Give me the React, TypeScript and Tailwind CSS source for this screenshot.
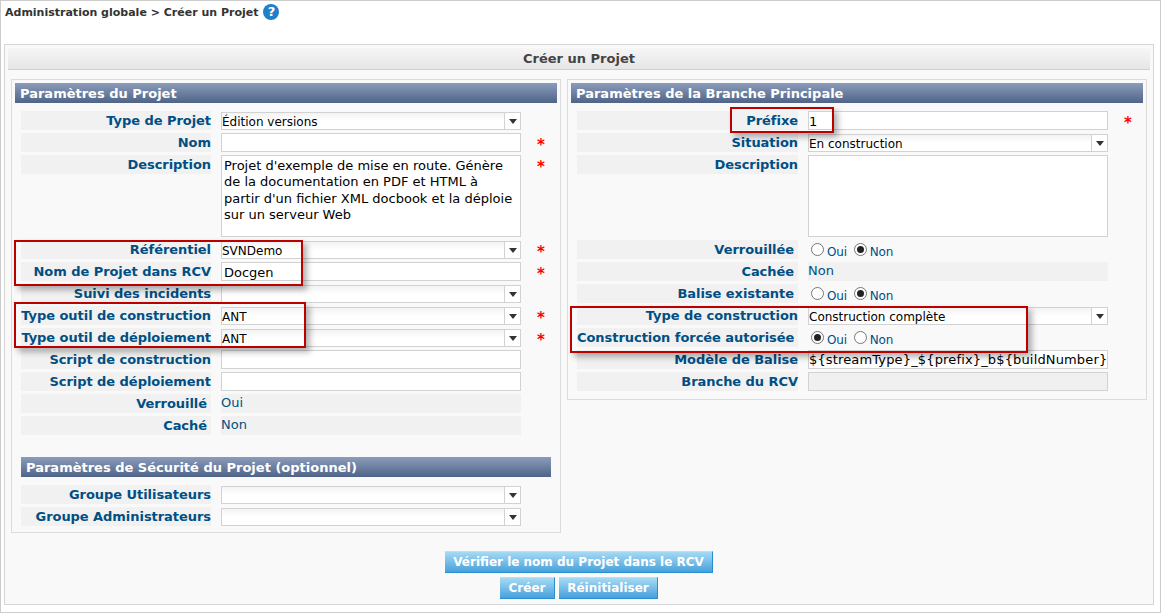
import React from "react";

const F = "font-['DejaVu_Sans','Liberation_Sans',sans-serif]";
const LABEL = "text-[#004f84]";

function Head({ children, className = "" }: { children: React.ReactNode; className?: string }) {
  return (
    <div className={`h-[20px] bg-gradient-to-b from-[#8c9dbb] to-[#4f6488] text-white font-bold text-[13px] leading-[21px] pl-[5px] ${className}`}>
      {children}
    </div>
  );
}

function Row({ label, w, vw, inset, star, h = 19, children }: { label: string; w: number; vw: number; inset?: boolean; star?: boolean; h?: number; children?: React.ReactNode }) {
  return (
    <div className="flex mb-[3px] items-start">
      <div
        className={`h-[19px] bg-[#f1f1f1] text-right font-bold text-[13px] leading-[19px] tracking-[-0.05px] shrink-0 whitespace-nowrap ${LABEL} ${inset ? "pr-[4px]" : ""}`}
        style={{ width: w }}
      >
        {label}
      </div>
      <div className="ml-[10px] shrink-0" style={{ width: vw, height: h }}>
        {children}
      </div>
      {star && <div className="ml-[16px] text-[#ff0000] font-bold text-[15px] leading-[25px] h-[19px]">*</div>}
    </div>
  );
}

function Select({ value }: { value?: string }) {
  return (
    <div className="h-[18px] mt-[1px] flex border border-[#d2d2d2] bg-gradient-to-b from-[#f3f3f3] to-white to-50%">
      <div className="flex-1 pt-[2px] text-[12px] leading-[14px] text-black whitespace-nowrap overflow-hidden">{value}</div>
      <div className="w-[16px] border-l border-[#d2d2d2] bg-white flex items-center justify-center">
        <svg width="8" height="5" viewBox="0 0 8 5"><path d="M0 0h8L4 5z" fill="#333" /></svg>
      </div>
    </div>
  );
}

function Input({ value, disabled, wide, flush }: { value?: string; disabled?: boolean; wide?: boolean; flush?: boolean }) {
  return (
    <div className={`h-[19px] border border-[#d2d2d2] text-[13px] whitespace-nowrap overflow-hidden text-black ${wide ? "tracking-[0.15px] leading-[17px]" : "leading-[19px]"} ${wide || flush ? "" : "pl-[2px]"} ${disabled ? "bg-[#f0f0f0]" : "bg-white"}`}>
      {value}
    </div>
  );
}

function Static({ children }: { children: React.ReactNode }) {
  return <div className={`h-[19px] bg-[#f1f1f1] text-[13px] leading-[18px] ${LABEL}`}>{children}</div>;
}

function Radio({ on, label }: { on?: boolean; label: string }) {
  return (
    <span className="flex items-center mr-[4px]">
      <span className="w-[13px] h-[13px] rounded-full border border-[#767676] bg-white flex items-center justify-center mx-[3px]">
        {on && <span className="w-[7px] h-[7px] rounded-full bg-[#222]" />}
      </span>
      <span className={`text-[12px] leading-[19px] mt-[5px] tracking-[-0.2px] ${LABEL}`}>{label}</span>
    </span>
  );
}

function Radios({ first }: { first?: boolean }) {
  return (
    <div className="flex h-[19px] items-center">
      <Radio on={first} label="Oui" />
      <Radio on={!first} label="Non" />
    </div>
  );
}

function Btn({ children, className = "" }: { children: React.ReactNode; className?: string }) {
  return (
    <div className={`h-[22px] bg-gradient-to-b from-[#a5daf3] to-[#44a1dc] border-b border-r border-[#2a8fd0] border-t border-t-[#b5e2f7] text-white font-bold text-[12px] leading-[21px] text-center whitespace-nowrap ${className}`}>
      {children}
    </div>
  );
}

function RedBox({ className }: { className: string }) {
  return <div className={`absolute border-2 border-[#bb0000] shadow-[4px_4px_6px_rgba(0,0,0,0.3)] pointer-events-none ${className}`} />;
}

export default function App() {
  const LW = 190, LV = 300, RW = 221, RV = 300;
  return (
    <div className={`relative h-[613px] w-[1161px] border border-[#cccccc] bg-white overflow-hidden ${F}`}>
      <div className="h-[43px] pl-[4px] flex items-start">
        <span className="font-bold text-[11px] leading-[23px] text-[#333]">Administration globale &gt; Créer un Projet</span>
        <span className="ml-[5px] mt-[3px] w-[16px] h-[16px] rounded-full bg-[#1f7fc9] text-white text-[13px] font-bold leading-[16px] text-center">?</span>
      </div>

      <div className="ml-[3px] w-[1150px] h-[561px] border border-[#d6d6d6] bg-[#f9f9f9] px-[3px] pt-[3px]">
        <div className="h-[22px] bg-gradient-to-b from-[#f6f6f6] to-[#e6e6e6] border-b border-[#cfcfcf] text-center font-bold text-[13px] leading-[21px] text-[#444]">
          Créer un Projet
        </div>

        <div className="flex items-start mt-[9px] ml-[3px]">
          <div className="w-[550px] h-[454px] border border-[#dcdcdc] px-[3px] pt-[3px] shrink-0">
            <Head>Paramètres du Projet</Head>
            <div className="pl-[6px] pt-[8px]">
              <Row label="Type de Projet" w={LW} vw={LV}><Select value="Édition versions" /></Row>
              <Row label="Nom" w={LW} vw={LV} star><Input /></Row>
              <Row label="Description" w={LW} vw={LV} star h={82}>
                <div className="h-[82px] border border-[#d2d2d2] bg-white text-[13px] leading-[16.3px] pl-[2px] pr-[6px] pt-[2px] text-black">
                  Projet d'exemple de mise en route. Génère de la documentation en PDF et HTML à partir d'un fichier XML docbook et la déploie sur un serveur Web
                </div>
              </Row>
              <Row label="Référentiel" w={LW} vw={LV} star><Select value="SVNDemo" /></Row>
              <Row label="Nom de Projet dans RCV" w={LW} vw={LV} star><Input value="Docgen" /></Row>
              <Row label="Suivi des incidents" w={LW} vw={LV}><Select /></Row>
              <Row label="Type outil de construction" w={LW} vw={LV} star><Select value="ANT" /></Row>
              <Row label="Type outil de déploiement" w={LW} vw={LV} star><Select value="ANT" /></Row>
              <Row label="Script de construction" w={LW} vw={LV}><Input /></Row>
              <Row label="Script de déploiement" w={LW} vw={LV}><Input /></Row>
              <Row label="Verrouillé" w={LW} vw={LV} inset><Static>Oui</Static></Row>
              <Row label="Caché" w={LW} vw={LV} inset><Static>Non</Static></Row>
            </div>
            <Head className="ml-[6px] mr-[6px] mt-[22px]">Paramètres de Sécurité du Projet (optionnel)</Head>
            <div className="pl-[6px] pt-[8px]">
              <Row label="Groupe Utilisateurs" w={LW} vw={LV}><Select /></Row>
              <Row label="Groupe Administrateurs" w={LW} vw={LV}><Select /></Row>
            </div>
          </div>

          <div className="w-[580px] h-[321px] ml-[6px] border border-[#dcdcdc] px-[3px] pt-[3px] shrink-0">
            <Head>Paramètres de la Branche Principale</Head>
            <div className="pl-[6px] pt-[8px]">
              <Row label="Préfixe" w={RW} vw={RV} star><Input flush value="1" /></Row>
              <Row label="Situation" w={RW} vw={RV}><Select value="En construction" /></Row>
              <Row label="Description" w={RW} vw={RV} h={82}>
                <div className="h-[82px] border border-[#d2d2d2] bg-white" />
              </Row>
              <Row label="Verrouillée" w={RW} vw={RV} inset><Radios /></Row>
              <Row label="Cachée" w={RW} vw={RV} inset><Static>Non</Static></Row>
              <Row label="Balise existante" w={RW} vw={RV} inset><Radios /></Row>
              <Row label="Type de construction" w={RW} vw={RV}><Select value="Construction complète" /></Row>
              <Row label="Construction forcée autorisée" w={RW} vw={RV} inset><Radios first /></Row>
              <Row label="Modèle de Balise" w={RW} vw={RV}><Input wide value="${streamType}_${prefix}_b${buildNumber}" /></Row>
              <Row label="Branche du RCV" w={RW} vw={RV}><Input disabled /></Row>
            </div>
          </div>
        </div>

        <div className="flex flex-col items-center mt-[18px] gap-[4px]">
          <Btn className="w-[268px]">Vérifier le nom du Projet dans le RCV</Btn>
          <div className="flex gap-[4px]">
            <Btn className="w-[55px]">Créer</Btn>
            <Btn className="w-[99px]">Réinitialiser</Btn>
          </div>
        </div>
      </div>

      <RedBox className="left-[729px] top-[106px] w-[104px] h-[26px]" />
      <RedBox className="left-[13px] top-[239px] w-[289px] h-[46px]" />
      <RedBox className="left-[13px] top-[301px] w-[292px] h-[46px]" />
      <RedBox className="left-[569px] top-[305px] w-[458px] h-[47px]" />
    </div>
  );
}
